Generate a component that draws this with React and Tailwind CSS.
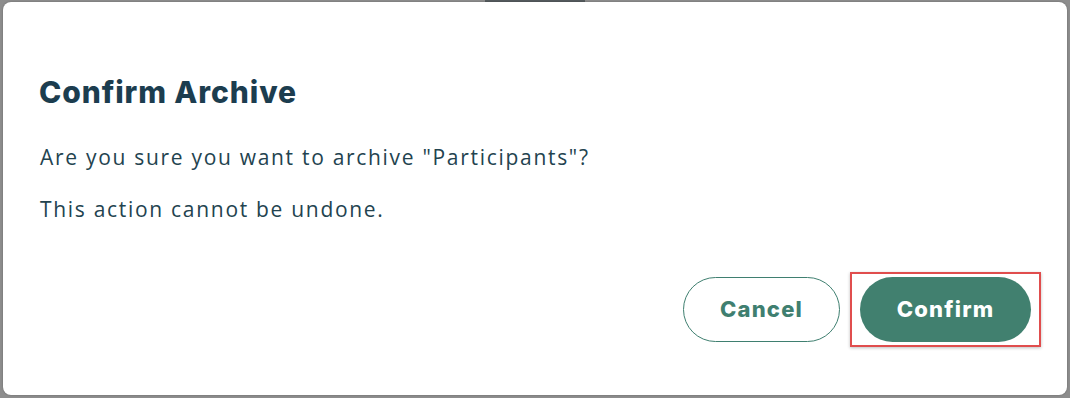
export default function App() {
  return (
    <div className="h-[398px] w-[1070px] overflow-hidden bg-[#8d8d8d] px-[3px]" style={{ fontFamily: '"Open Sans", sans-serif' }}>
      {/* bottom edge of the page heading behind the dialog */}
      <div className="flex h-[2px] justify-center">
        <div className="h-[2px] w-[100px] bg-[#555b5e]" />
      </div>
      <div className="relative h-[393px] rounded-[8px] bg-white pl-[36px] pr-[29px] pt-[72px] shadow-[0_0_2px_rgba(0,0,0,0.3)]">
        <h2 className="text-[30px] font-extrabold leading-[36px] tracking-[0.9px] text-[#1c3d4f]" style={{ fontFamily: 'Inter, sans-serif' }}>
          Confirm Archive
        </h2>
        <p className="mt-[34px] pl-[1px] text-[21px] leading-[26px] tracking-[1.7px] text-[#23434f]">
          Are you sure you want to archive "Participants"?
        </p>
        <p className="mt-[26px] pl-[1px] text-[21px] leading-[26px] tracking-[1.7px] text-[#23434f]">
          This action cannot be undone.
        </p>
        <div className="mt-[55px] flex justify-end gap-[20px] pr-[7px]">
          <button className="h-[65px] w-[157px] rounded-full border border-[#3f7f70] text-[22px] font-extrabold tracking-[1.2px] text-[#3f7f70]" style={{ fontFamily: 'Inter, sans-serif' }}>
            Cancel
          </button>
          <div className="relative">
            <button className="h-[65px] w-[171px] rounded-full bg-[#41806f] text-[22px] font-extrabold tracking-[1.2px] text-white" style={{ fontFamily: 'Inter, sans-serif' }}>
              Confirm
            </button>
            <div className="pointer-events-none absolute -inset-x-[10px] -inset-y-[5px] border-2 border-[#e04d4d] shadow-[0_1px_3px_rgba(0,0,0,0.25)]" />
          </div>
        </div>
      </div>
    </div>
  );
}
